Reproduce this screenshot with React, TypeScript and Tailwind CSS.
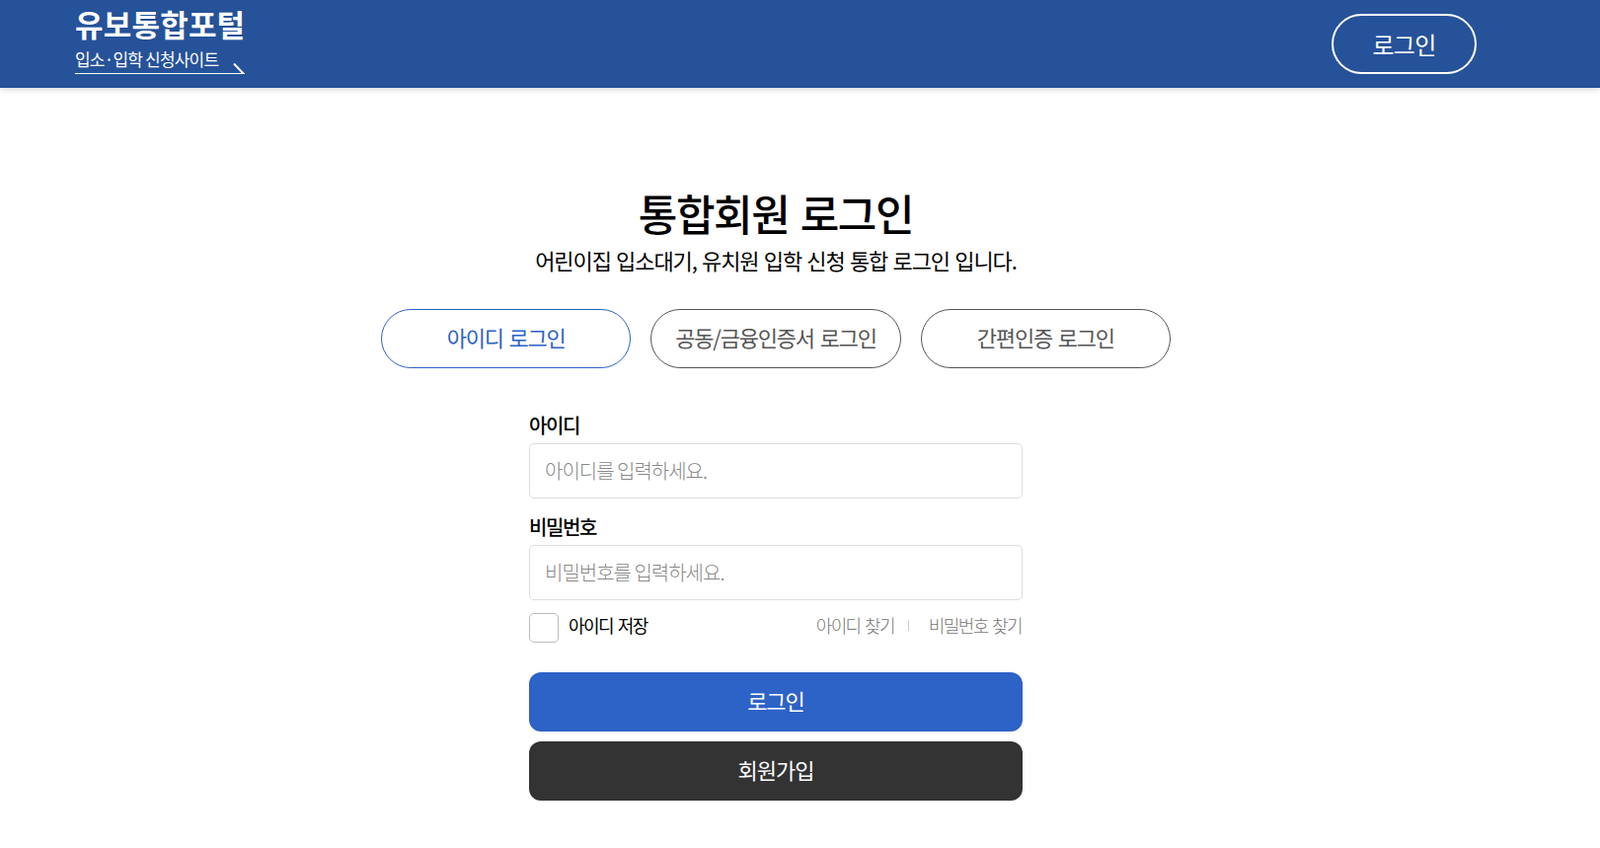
import React from 'react';

const tabs = ['아이디 로그인', '공동/금융인증서 로그인', '간편인증 로그인'];

export default function App() {
  return (
    <div className="min-h-[859px] bg-white font-['Noto_Sans_CJK_KR','Noto_Sans',sans-serif] text-black">
      <header className="h-[89px] bg-[#265299] pr-[49px] shadow-[0_2px_6px_rgba(0,0,0,0.15)]">
        <div className="mx-auto flex h-full w-[1420px] items-start justify-between">
          <a className="block w-[172px]">
            <div className="mt-[3px] h-[42px] text-[31px] leading-[42px] font-bold tracking-[0.2px] whitespace-nowrap text-white">유보통합포털</div>
            <div className="relative mt-[4px] h-[26px] border-b border-white text-[17px] leading-[21px] tracking-[-0.8px] whitespace-nowrap text-white">
              입소·입학 신청사이트
              <svg className="absolute right-0 bottom-[-1px]" width="12" height="11" viewBox="0 0 12 11">
                <path d="M1 0.5 L10.5 10.5" stroke="#fff" strokeWidth="2" fill="none" />
              </svg>
            </div>
          </a>
          <button className="mt-[14px] h-[61px] w-[147px] rounded-full border-2 border-white text-[24px] tracking-[-0.8px] text-white">로그인</button>
        </div>
      </header>

      <main className="pr-[49px]">
        <div className="mx-auto flex w-[800px] flex-col items-center pt-[104px]">
          <h1 className="text-[43px] leading-[44px] font-medium tracking-[-1.4px] [word-spacing:3px]">통합회원 로그인</h1>
          <p className="mt-[10px] text-[22px] leading-[32px] font-normal tracking-[-1.1px] [word-spacing:1.5px]">어린이집 입소대기, 유치원 입학 신청 통합 로그인 입니다.</p>

          <div className="mt-[34px] flex w-full gap-[20px]">
            {tabs.map((tab, i) => (
              <button
                key={tab}
                className={`h-[60px] flex-1 rounded-full border pb-[4px] text-[22px] tracking-[-1.2px] [word-spacing:2px] ${
                  i === 0 ? 'border-[#2d62c6] text-[#2d62c6]' : 'border-[#555] text-[#555]'
                }`}
              >
                {tab}
              </button>
            ))}
          </div>

          <form className="mt-[43px] w-[500px]">
            <label className="block text-[20px] leading-[30px] font-medium tracking-[-1.4px]">아이디</label>
            <input
              className="mt-[3px] h-[56px] w-full rounded-[5px] border border-[#ddd] px-[15px] pb-[2px] text-[20px] font-light tracking-[-1px] placeholder:text-[#888]"
              placeholder="아이디를 입력하세요."
            />
            <label className="mt-[14px] block text-[20px] leading-[30px] font-medium tracking-[-1.4px]">비밀번호</label>
            <input
              className="mt-[3px] h-[56px] w-full rounded-[5px] border border-[#ddd] px-[15px] pb-[2px] text-[20px] font-light tracking-[-1px] placeholder:text-[#888]"
              placeholder="비밀번호를 입력하세요."
            />

            <div className="mt-[13px] flex h-[30px] items-center justify-between">
              <div className="flex items-center gap-[10px]">
                <span className="block h-[30px] w-[30px] rounded-[5px] border border-[#bbb]" />
                <span className="pb-[6px] text-[18px] leading-[24px] font-normal tracking-[-1.5px] [word-spacing:2px]">아이디 저장</span>
              </div>
              <div className="mr-[1px] flex items-center pb-[6px] text-[18px] leading-[24px] font-light tracking-[-1.6px] text-[#777] [word-spacing:2px]">
                <span>아이디 찾기</span>
                <span className="mr-[20px] ml-[14px] h-[11px] w-px bg-[#ccc]" />
                <span>비밀번호 찾기</span>
              </div>
            </div>

            <button className="mt-[30px] block h-[60px] w-full rounded-[12px] bg-[#2d62c6] pb-[4px] text-[22px] tracking-[-1px] text-white">로그인</button>
            <button className="mt-[10px] block h-[60px] w-full rounded-[12px] bg-[#333] pb-[4px] text-[22px] tracking-[-1px] text-white">회원가입</button>
          </form>
        </div>
      </main>
    </div>
  );
}
